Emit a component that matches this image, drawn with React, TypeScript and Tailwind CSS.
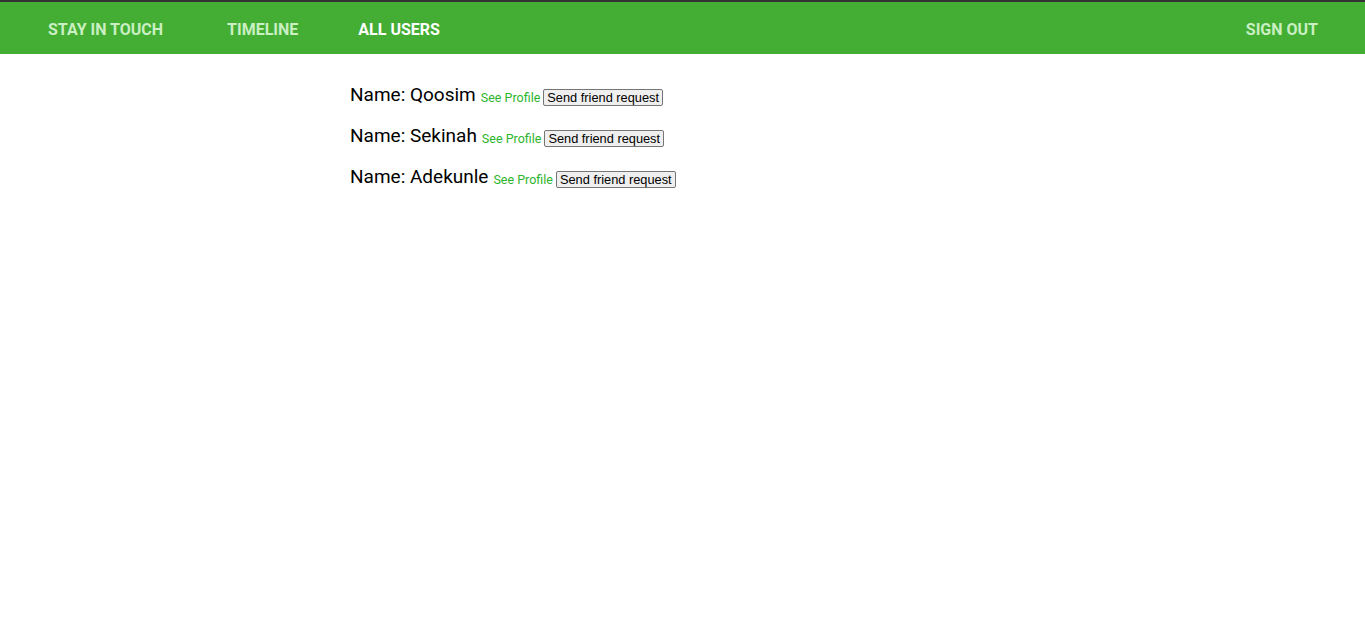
const users = ["Qoosim", "Sekinah", "Adekunle"];

export default function App() {
  return (
    <div className="min-h-[635px] bg-white font-['Roboto',sans-serif]">
      <nav className="flex h-[54px] items-center border-t-2 border-[#333333] bg-[#43ae33] pl-[48px] pr-[47px] pt-[4px] text-[16px] font-bold uppercase">
        <a className="text-[#c9efc2]">Stay in touch</a>
        <a className="ml-[64px] text-[#c9efc2]">Timeline</a>
        <a className="ml-[60px] text-white">All users</a>
        <a className="ml-auto text-[#c9efc2]">Sign out</a>
      </nav>
      <div className="flex flex-col gap-[18px] pl-[350px] pt-[30px]">
        {users.map((name) => (
          <div key={name} className="flex h-[23px] items-center">
            <span className="text-[19px] text-black">Name: {name}</span>
            <a className="ml-[5px] mt-[5px] text-[12.5px] text-[#2db52d]">See Profile</a>
            <button className="ml-[3px] mt-[3px] rounded-[2px] border border-[#767676] bg-[#efefef] px-[3px] font-['Liberation_Sans',sans-serif] text-[12.8px] leading-[15px] text-black">
              Send friend request
            </button>
          </div>
        ))}
      </div>
    </div>
  );
}
